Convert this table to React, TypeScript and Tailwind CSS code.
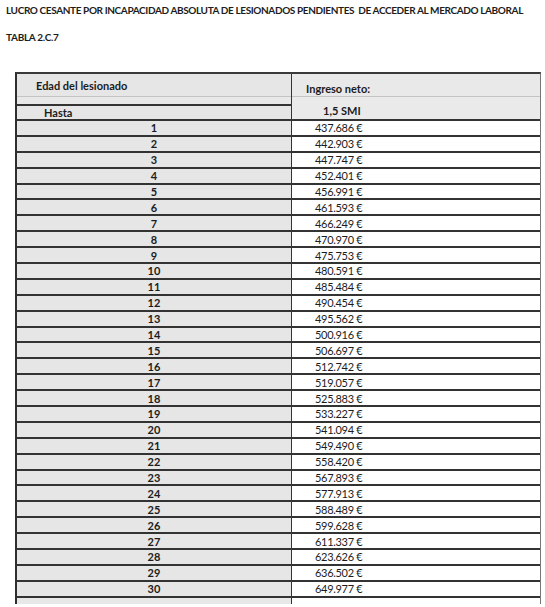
const values = [
  '437.686 €',
  '442.903 €',
  '447.747 €',
  '452.401 €',
  '456.991 €',
  '461.593 €',
  '466.249 €',
  '470.970 €',
  '475.753 €',
  '480.591 €',
  '485.484 €',
  '490.454 €',
  '495.562 €',
  '500.916 €',
  '506.697 €',
  '512.742 €',
  '519.057 €',
  '525.883 €',
  '533.227 €',
  '541.094 €',
  '549.490 €',
  '558.420 €',
  '567.893 €',
  '577.913 €',
  '588.489 €',
  '599.628 €',
  '611.337 €',
  '623.626 €',
  '636.502 €',
  '649.977 €',
]

export default function App() {
  return (
    <div
      className="w-[545px] h-[607px] overflow-hidden bg-white text-[#1c1c1c]"
      style={{ fontFamily: 'Lato, "Liberation Sans", sans-serif' }}
    >
      <div className="pl-[6px] pt-[4px]">
        <p className="text-[10px] font-bold leading-[12px] tracking-[-0.38px] whitespace-pre">
          LUCRO CESANTE POR INCAPACIDAD ABSOLUTA DE LESIONADOS PENDIENTES  DE ACCEDER AL MERCADO LABORAL
        </p>
        <p className="mt-[15px] text-[10px] font-bold leading-[12px] tracking-[-0.3px]">TABLA 2.C.7</p>
      </div>

      <div className="mt-[29px] ml-[15px] w-[526px] border-t-2 border-l-2 border-r border-t-[#3a3a3a] border-l-[#2e2e2e] border-r-[#777]">
        {/* header */}
        <div className="grid grid-cols-[275px_248px]">
          <div className="flex flex-col border-r-[1.5px] border-[#333]">
            <div className="h-[23px] flex items-center pl-[19px] bg-[#e6e6e6] border-b border-[#c4c4c4] text-[11px] font-bold leading-none">
              Edad del lesionado
            </div>
            <div className="h-[9px] bg-[#e8e8e8] border-b-2 border-[#333]" />
            <div className="h-[15px] flex items-center pl-[27px] bg-[#e6e6e6] border-b-2 border-[#333] text-[11px] font-bold leading-none">
              Hasta
            </div>
          </div>
          <div className="flex flex-col">
            <div className="h-[23px] flex items-end pb-[2px] pl-[14px] bg-[#e9e9e9] border-b border-[#c4c4c4] text-[11px] font-bold leading-none">
              Ingreso neto:
            </div>
            <div className="h-[24px] flex items-end pb-[3px] pl-[31px] bg-[#eaeaea] border-b-2 border-[#333] text-[11px] font-bold leading-none">
              1,5 SMI
            </div>
          </div>
        </div>

        {/* rows */}
        {values.map((v, i) => (
          <div key={i} className="grid grid-cols-[275px_248px] h-[15.9px] border-b-2 border-[#333]">
            <div className="flex items-center justify-center bg-[#e6e6e6] border-r-[1.5px] border-[#333] text-[11px] font-bold leading-none">
              {i + 1}
            </div>
            <div className="flex items-center pl-[23px] bg-white text-[11px] leading-none tracking-[-0.3px]">
              {v}
            </div>
          </div>
        ))}

        {/* partial row at the cut */}
        <div className="grid grid-cols-[275px_248px] h-[6px]">
          <div className="bg-[#e8e8e8] border-r-[1.5px] border-[#333]" />
          <div className="bg-white" />
        </div>
      </div>
    </div>
  )
}
